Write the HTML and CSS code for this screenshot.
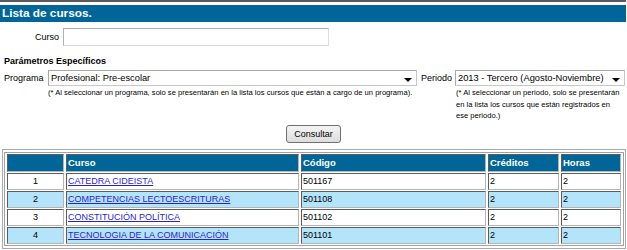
FILE: index.html
```html
<!DOCTYPE html>
<html lang="es">
<head>
    <meta charset="UTF-8">
    <title>Lista de cursos</title>
    <link rel="stylesheet" href="styles.css">
</head>
<body>
    <div class="topline"></div>
    <div class="titlebar">Lista de cursos.</div>

    <div class="row-curso">
        <label class="lbl-curso" for="curso">Curso</label>
        <input type="text" id="curso" class="txt-curso">
    </div>

    <div class="section">Parámetros Específicos</div>

    <div class="params">
        <span class="lbl lbl-prog">Programa</span>
        <div class="field field-prog">
            <div class="select">Profesional: Pre-escolar<i class="arrow"></i></div>
            <div class="note">(* Al seleccionar un programa, solo se presentarán en la lista los cursos que están a cargo de un programa).</div>
        </div>
        <span class="lbl lbl-per">Periodo</span>
        <div class="field field-per">
            <div class="select">2013 - Tercero (Agosto-Noviembre)<i class="arrow"></i></div>
            <div class="note">(* Al seleccionar un periodo, solo se presentarán<br>en la lista los cursos que están registrados en<br>ese periodo.)</div>
        </div>
    </div>

    <div class="actions">
        <button type="button" class="btn">Consultar</button>
    </div>

    <div class="grid-wrap">
        <table class="grid">
            <tr class="head">
                <td class="c1"></td>
                <td class="c2">Curso</td>
                <td class="c3">Código</td>
                <td class="c4">Créditos</td>
                <td class="c5">Horas</td>
            </tr>
            <tr>
                <td class="c1 num">1</td>
                <td class="c2"><a href="#">CATEDRA CIDEISTA</a></td>
                <td class="c3">501167</td>
                <td class="c4">2</td>
                <td class="c5">2</td>
            </tr>
            <tr class="alt">
                <td class="c1 num">2</td>
                <td class="c2"><a href="#">COMPETENCIAS LECTOESCRITURAS</a></td>
                <td class="c3">501108</td>
                <td class="c4">2</td>
                <td class="c5">2</td>
            </tr>
            <tr>
                <td class="c1 num">3</td>
                <td class="c2"><a href="#">CONSTITUCIÓN POLÍTICA</a></td>
                <td class="c3">501102</td>
                <td class="c4">2</td>
                <td class="c5">2</td>
            </tr>
            <tr class="alt">
                <td class="c1 num">4</td>
                <td class="c2"><a href="#">TECNOLOGIA DE LA COMUNICACIÓN</a></td>
                <td class="c3">501101</td>
                <td class="c4">2</td>
                <td class="c5">2</td>
            </tr>
        </table>
    </div>
</body>
</html>
```

FILE: styles.css
```css
body {
    margin: 0;
    font-family: "Liberation Sans", Arial, sans-serif;
    font-size: 9px;
    color: #000;
    background: #fff;
}

.topline {
    width: 626px;
    height: 2px;
    background-color: #5a5a5a;
}

.titlebar {
    width: 624px;
    height: 17px;
    margin-top: 3px;
    padding-left: 2px;
    background-color: #006699;
    color: #fff;
    font-size: 11.8px;
    font-weight: bold;
    line-height: 17px;
}

.row-curso {
    display: flex;
    align-items: center;
    margin-top: 6px;
}

.lbl-curso {
    width: 59px;
    text-align: right;
}

.txt-curso {
    box-sizing: border-box;
    width: 266px;
    height: 18px;
    margin: 0 0 0 4px;
    padding: 0 2px;
    border: 1px solid;
    border-color: #b0b0b0 #dedede #dedede #b0b0b0;
    outline: none;
    font: 9px "Liberation Sans", Arial, sans-serif;
}

.section {
    margin-top: 10px;
    padding-left: 4px;
    font-weight: bold;
    line-height: 11px;
}

.params {
    display: flex;
    margin-top: 3px;
}

.lbl {
    line-height: 16px;
}

.lbl-prog {
    width: 44px;
    padding-left: 4px;
}

.lbl-per {
    width: 34px;
    padding-left: 4px;
}

.field-prog {
    width: 369px;
}

.field-per {
    width: 170px;
}

.field-per .note {
    line-height: 11.5px;
    padding-left: 1px;
}

.select {
    position: relative;
    box-sizing: border-box;
    height: 16px;
    padding-left: 2px;
    border: 1px solid;
    border-color: #a8a8a8 #c8c8c8 #c8c8c8 #a8a8a8;
    font-size: 9.3px;
    line-height: 14px;
    white-space: nowrap;
}

.arrow {
    position: absolute;
    right: 4px;
    top: 7px;
    width: 0;
    height: 0;
    border-left: 4px solid transparent;
    border-right: 4px solid transparent;
    border-top: 4px solid #000;
}

.note {
    margin-top: 1px;
    font-size: 7.6px;
    line-height: 11px;
    white-space: nowrap;
}

.actions {
    margin-top: 3px;
    text-align: center;
}

.btn {
    box-sizing: border-box;
    width: 55px;
    height: 18px;
    padding: 0;
    border: 1px solid #707070;
    border-radius: 3px;
    background: linear-gradient(#f4f4f4, #dcdcdc);
    font: 9px "Liberation Sans", Arial, sans-serif;
    color: #000;
}

.grid-wrap {
    box-sizing: border-box;
    width: 624px;
    margin: 6px 0 0 2px;
    padding: 2px 1px;
    border: 1px solid #a9a9a9;
}

.grid {
    width: 620px;
    border: 1px solid #a0a0a0;
    border-spacing: 2px 1px;
    table-layout: fixed;
}

.grid td {
    box-sizing: border-box;
    height: 17px;
    padding: 0 1px;
    border: 1px solid;
    border-color: #5c5c5c #b4b4b4 #b4b4b4 #5c5c5c;
    background-color: #fff;
    white-space: nowrap;
}

.grid .head td {
    height: 18px;
    background-color: #006699;
    color: #fff;
    font-weight: bold;
    font-size: 9.5px;
}

.grid .alt td {
    background-color: #b3e4fa;
}

.c1 { width: 57px; }
.c2 { width: 233px; }
.c3 { width: 185px; }
.c4 { width: 71px; }
.c5 { width: 60px; }

.num {
    text-align: center;
}

.grid a {
    color: #2a1fd6;
}
```
